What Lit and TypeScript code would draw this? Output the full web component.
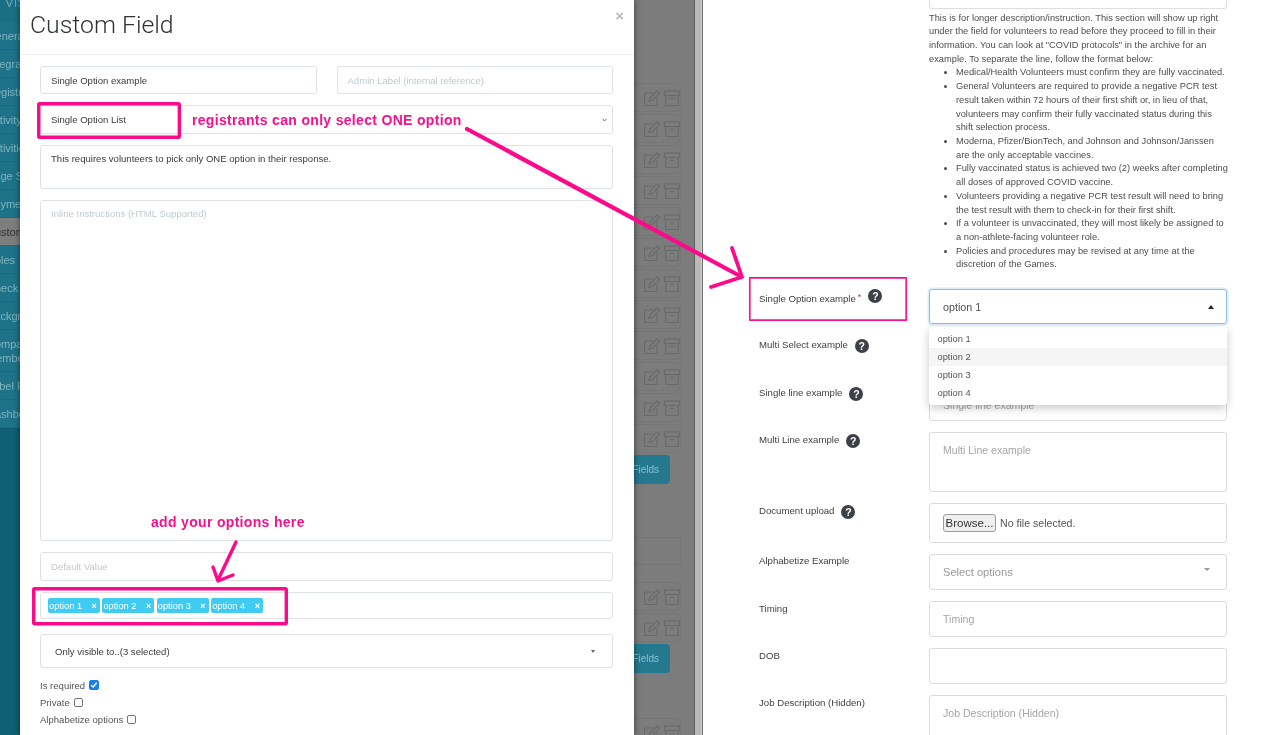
import { LitElement, html, css, svg } from "lit";
import { customElement } from "lit/decorators.js";

const SIDE = [
  ["General", ""], ["Integrations", ""], ["Registration", ""], ["Activity", ""], ["Activities", ""],
  ["Page Setup", ""], ["Payment", ""], ["Custom", "on"], ["Roles", ""], ["Check In", ""], ["Background", ""],
];
const SIDE2 = ["Label Print", "Dashboard"];

const OPTIONS = ["option 1", "option 2", "option 3", "option 4"];

const INTRO = [
  "This is for longer description/instruction. This section will show up right",
  "under the field for volunteers to read before they proceed to fill in their",
  'information. You can look at "COVID protocols" in the archive for an',
  "example. To separate the line, follow the format below:",
];

const BULLETS = [
  ["Medical/Health Volunteers must confirm they are fully vaccinated."],
  [
    "General Volunteers are required to provide a negative PCR test",
    "result taken within 72 hours of their first shift or, in lieu of that,",
    "volunteers may confirm their fully vaccinated status during this",
    "shift selection process.",
  ],
  ["Moderna, Pfizer/BionTech, and Johnson and Johnson/Janssen", "are the only acceptable vaccines."],
  ["Fully vaccinated status is achieved two (2) weeks after completing", "all doses of approved COVID vaccine."],
  ["Volunteers providing a negative PCR test result will need to bring", "the test result with them to check-in for their first shift."],
  ["If a volunteer is unvaccinated, they will most likely be assigned to", "a non-athlete-facing volunteer role."],
  ["Policies and procedures may be revised at any time at the", "discretion of the Games."],
];

const rowIcons = html`<svg class="ri" width="36" height="16" viewBox="0 0 36 16" fill="none" stroke="#6a6a6a" stroke-width="1.1">
  <path d="M9 3H1.5a1 1 0 0 0-1 1v10.5a1 1 0 0 0 1 1H12a1 1 0 0 0 1-1V8"/>
  <path d="M5 11.5l1-3.5L13 .8l2.5 2.5L8.5 10.5z"/>
  <rect x="20.5" y="1" width="15" height="4.5"/>
  <path d="M21.7 5.5V15.5h12.6V5.5M26 8.5h4"/>
</svg>`;

const help = html`<span class="help">?</span>`;

@customElement("app-root")
export class AppRoot extends LitElement {
  static styles = css`
    :host { display: block; position: relative; width: 1280px; height: 735px; overflow: hidden; background: #fff;
      font-family: "Liberation Sans", Arial, sans-serif; filter: blur(.4px); }
    .page { display: flex; height: 735px; }

    .left { position: relative; width: 694px; height: 735px; display: flex; flex: none; background: #7c7c7c; overflow: hidden; }
    .side { width: 20px; flex: none; background: #0f5f75; overflow: hidden; white-space: nowrap; }
    .side-head { height: 22px; background: #1b6f84; color: #6aa6b4; font-size: 13px; padding-left: 5px; line-height: 5px; }
    .side-list { background: #1f7389; }
    .side-item { height: 28px; line-height: 28px; font-size: 11px; color: #7fb3c1; margin-left: -13px; box-sizing: border-box; border-bottom: 1px solid #1b6c82; }
    .side-item.on { background: #7e7e7e; color: #333; }
    .side-item.two { height: 42px; line-height: 14px; padding-top: 7px; }

    .main { flex: 1; display: flex; flex-direction: column; align-items: flex-end; padding: 83px 13px 0 0; box-sizing: border-box; }
    .main > * { flex: none; }
    .cell { width: 60px; height: 29px; margin-bottom: 2px; box-sizing: border-box; border: 1px solid #767676; border-radius: 4px; display: flex; align-items: center; justify-content: flex-end; }
    .ri { display: block; }
    .fbtn { height: 29px; line-height: 29px; padding: 0 11px; margin-right: 11px; background: #24798f; color: #8cc0ce; font-size: 10px; border-radius: 4px; }
    .box { width: 70px; height: 28px; border: 1px solid #767676; box-sizing: border-box; margin: 53px 0 17px; }
    .cell.last { margin-top: 45px; }

    .modal { position: absolute; left: 20px; top: 0; width: 614px; height: 735px; background: #fff; box-shadow: 0 0 6px rgba(0,0,0,.55); box-sizing: border-box; color: #3a3a3a; font-size: 9.55px; }
    .m-head { height: 55px; box-sizing: border-box; border-bottom: 1px solid #eef0f1; display: flex; align-items: flex-start; justify-content: space-between; padding: 9px 10px 0 10px; }
    .title { font-family: Roboto, "Liberation Sans", sans-serif; font-weight: 300; font-size: 24.8px; line-height: 32px; color: #2e3338; }
    .close { color: #bcbcbc; font-size: 15px; font-weight: bold; line-height: 14px; }
    .m-body { padding: 11px 21px 0 20px; display: flex; flex-direction: column; gap: 11px; }
    .pair { display: flex; gap: 20px; }
    .pair .f { flex: 1; }
    .f { box-sizing: border-box; border: 1px solid #dfe3e6; border-radius: 3px; padding: 0 10px; display: flex; align-items: center; justify-content: space-between; color: #3a3a3a; }
    .ph { color: #bfcad1; }
    .h28 { height: 28px; }
    .h29 { height: 29px; }
    .h27 { height: 27px; }
    .ta { align-items: flex-start; padding-top: 7px; }
    .h44 { height: 44px; }
    .h341 { height: 341px; }
    .chev { display: block; margin-right: -5px; }
    .multi { height: 34px; padding: 0 17px 0 14px; margin-top: 4px; }
    .caret { width: 0; height: 0; border-left: 2.5px solid transparent; border-right: 2.5px solid transparent; border-top: 3px solid #666; }
    .tags { padding: 0 7px; justify-content: flex-start; gap: 2.6px; }
    .tag { width: 51.8px; height: 15px; background: #41cbf0; color: #fff; border-radius: 2px; box-sizing: border-box; padding: 0 2px 0 1px; display: flex; align-items: center; justify-content: space-between; font-size: 9.3px; }
    .tag b { font-size: 9px; margin-right: 1px; }
    .checks { margin-top: -1px; display: flex; flex-direction: column; gap: 3px; color: #555; }
    .chk { display: flex; align-items: center; gap: 4px; height: 14px; }
    .box-c { width: 7px; height: 7px; border: 1px solid #777; border-radius: 2px; background: #fff; display: block; }
    .box-c.y { width: 8px; height: 8px; background: #1b7fe6; border-color: #1b7fe6; position: relative; }
    .box-c.y svg { position: absolute; left: 0; top: 0; }

    .gutter { width: 9px; flex: none; background: linear-gradient(90deg, #5f5f5f 0 1px, #b9b9b9 1px 7px, #d0d0d0 7px 8px, #6c6c6c 8px 9px); }

    .right { flex: 1; box-sizing: border-box; padding: 0 53px 0 56px; height: 735px; overflow: hidden; color: #444; }
    .top-input { margin-left: 170px; height: 9px; box-sizing: border-box; border: 1px solid #dedede; border-top: none; border-radius: 0 0 3px 3px; }
    .desc { margin: 2.5px 0 0 170px; line-height: 13.72px; color: #4d4d4d; height: 260.5px; font-size: 9.3px; white-space: nowrap; }
    .desc ul { margin: 0; padding-left: 27px; }
    .desc span { display: block; }
    .form { margin-top: 17px; display: flex; flex-direction: column; gap: 11px; }
    .row { display: grid; grid-template-columns: 170px 1fr; }
    .lab { display: flex; align-items: flex-start; line-height: 12px; color: #3f3f3f; font-size: 9.65px; }
    .star { color: #d5263b; font-size: 9px; margin-left: 2px; line-height: 8px; }
    .help { width: 14px; height: 14px; border-radius: 50%; background: #3e4047; color: #fff; font-weight: bold; font-size: 10.5px; line-height: 14px; text-align: center; margin: 0 0 0 7px; flex: none; }
    .star + .help { margin-left: 7px; margin-top: -4px; }
    .c { position: relative; box-sizing: border-box; border: 1px solid #dcdcdc; border-radius: 3px; padding: 0 13px; display: flex; align-items: center; justify-content: space-between; font-size: 10.55px; color: #a5a5a5; }
    .c.top { align-items: flex-start; padding-top: 11px; }
    .c.low { padding-top: 3px; }
    .c.focus { border-color: #8cbfee; box-shadow: 0 0 0 1.5px rgba(140,191,238,.3); color: #505050; font-size: 10.75px; }
    .sel { font-size: 11.1px; color: #999; }
    .up { width: 0; height: 0; border-left: 3.5px solid transparent; border-right: 3.5px solid transparent; border-bottom: 4px solid #222; margin-right: -1px; }
    .down { width: 0; height: 0; border-left: 3.5px solid transparent; border-right: 3.5px solid transparent; border-top: 3.5px solid #999; margin: -6px 3px 0 0; }
    .menu { position: absolute; left: -1px; right: -1px; top: 37px; height: 78px; box-sizing: border-box; padding: 3px 0; background: #fff; border-radius: 3px; box-shadow: 0 3px 10px rgba(0,0,0,.22); z-index: 3; }
    .menu div { height: 18px; line-height: 18px; padding: 0 8.5px; font-size: 9.3px; color: #555; }
    .menu div.hl { background: #f5f5f5; }
    .file { display: flex; align-items: center; gap: 4px; }
    .browse { width: 53px; height: 18px; box-sizing: border-box; background: #efefef; border: 1px solid #9c9c9c; border-radius: 3px; font-size: 11.5px; color: #333; text-align: center; line-height: 16px; }
    .nofile { font-size: 10.6px; color: #555; }

    .over { position: absolute; left: 0; top: 0; pointer-events: none; z-index: 5; }
    .note { position: absolute; color: #f7108c; font-weight: bold; white-space: nowrap; z-index: 6; font-size: 14px; line-height: 16px; letter-spacing: .32px; }
    .n1 { left: 192px; top: 112px; }
    .n2 { left: 151px; top: 514px; }
  `;

  row(label: string, h: number, pad: number, opts: { star?: boolean; help?: boolean }, body: unknown, cls = "") {
    return html`<div class="row">
      <div class="lab" style="padding-top:${pad}px">
        ${label}${opts.star ? html`<span class="star">*</span>` : ""}${opts.help ? help : ""}
      </div>
      <div class="c ${cls}" style="height:${h}px">${body}</div>
    </div>`;
  }

  render() {
    return html`
      <div class="page">
        <section class="left">
          <nav class="side">
            <div class="side-head">VISIT</div>
            <div class="side-list">
              ${SIDE.map(([t, c]) => html`<div class="side-item ${c}">${t}</div>`)}
              <div class="side-item two">Company<br />Members</div>
              ${SIDE2.map((t) => html`<div class="side-item">${t}</div>`)}
            </div>
          </nav>
          <div class="main">
            ${Array.from({ length: 12 }, () => html`<div class="cell">${rowIcons}</div>`)}
            <div class="fbtn">Add Fields</div>
            <div class="box"></div>
            <div class="cell">${rowIcons}</div>
            <div class="cell">${rowIcons}</div>
            <div class="fbtn">Add Fields</div>
            <div class="cell last">${rowIcons}</div>
          </div>
          <div class="modal">
            <header class="m-head">
              <div class="title">Custom Field</div>
              <div class="close">×</div>
            </header>
            <div class="m-body">
              <div class="pair">
                <div class="f h28">Single Option example</div>
                <div class="f h28 ph">Admin Label (internal reference)</div>
              </div>
              <div class="f h29">Single Option List <svg class="chev" width="5" height="4" viewBox="0 0 5 4" fill="none" stroke="#666" stroke-width="1"><path d="M.5.8 2.5 3 4.5.8"/></svg></div>
              <div class="f h44 ta">This requires volunteers to pick only ONE option in their response.</div>
              <div class="f h341 ta ph">Inline Instructions (HTML Supported)</div>
              <div class="f h29 ph">Default Value</div>
              <div class="f h27 tags">
                ${OPTIONS.map((o) => html`<span class="tag">${o}<b>×</b></span>`)}
              </div>
              <div class="f multi">Only visible to..(3 selected) <span class="caret"></span></div>
              <div class="checks">
                <label class="chk">Is required <span class="box-c y"><svg width="8" height="8" viewBox="0 0 8 8" fill="none" stroke="#fff" stroke-width="1.4"><path d="M1.3 4.2 3.2 6 6.7 1.8"/></svg></span></label>
                <label class="chk">Private <span class="box-c"></span></label>
                <label class="chk">Alphabetize options <span class="box-c"></span></label>
              </div>
            </div>
          </div>
        </section>
        <div class="gutter"></div>
        <section class="right">
          <div class="top-input"></div>
          <div class="desc">
            ${INTRO.map((l) => html`<span>${l}</span>`)}
            <ul>${BULLETS.map((b) => html`<li>${b.map((l) => html`<span>${l}</span>`)}</li>`)}</ul>
          </div>
          <div class="form">
            ${this.row("Single Option example", 35, 4, { star: true, help: true }, html`<span>option 1</span><span class="up"></span>
              <div class="menu">${OPTIONS.map((o, i) => html`<div class=${i === 1 ? "hl" : ""}>${o}</div>`)}</div>`, "focus")}
            ${this.row("Multi Select example", 39, 4, { help: true }, html`<span class="sel">Select options</span>`)}
            ${this.row("Single line example", 36, 2, { help: true }, html`<span>Single line example</span>`, "low")}
            ${this.row("Multi Line example", 60, 2, { help: true }, html`<span>Multi Line example</span>`, "top")}
            ${this.row("Document upload", 40, 1.5, { help: true }, html`<div class="file"><span class="browse">Browse...</span><span class="nofile">No file selected.</span></div>`)}
            ${this.row("Alphabetize Example", 36, 1, {}, html`<span class="sel">Select options</span><span class="down"></span>`)}
            ${this.row("Timing", 36, 2, {}, html`<span>Timing</span>`)}
            ${this.row("DOB", 36, 2, {}, "")}
            ${this.row("Job Description (Hidden)", 60, 2, {}, html`<span>Job Description (Hidden)</span>`, "top")}
          </div>
        </section>
      </div>
      <div class="note n1">registrants can only select ONE option</div>
      <div class="note n2">add your options here</div>
      <svg class="over" width="1280" height="735" viewBox="0 0 1280 735" fill="none" stroke-linecap="round" stroke-linejoin="round">
        ${svg`
          <rect x="38.7" y="103.7" width="140.6" height="33.6" stroke="#fb0a8a" stroke-width="3.4" rx="1"/>
          <rect x="33.7" y="588.7" width="252.6" height="35" stroke="#fb0a8a" stroke-width="3.4" rx="1"/>
          <rect x="749.8" y="277.8" width="156.4" height="42.4" stroke="#f5148c" stroke-width="1.7"/>
          <path d="M467 129 740 276" stroke="#fb0a8a" stroke-width="4.2"/>
          <path d="M732 248 742 277 711 287" stroke="#fb0a8a" stroke-width="3.8"/>
          <path d="M236 542 218 580" stroke="#fb0a8a" stroke-width="3.4"/>
          <path d="M213 567 218 581 233 575" stroke="#fb0a8a" stroke-width="3.4"/>
        `}
      </svg>
    `;
  }
}
